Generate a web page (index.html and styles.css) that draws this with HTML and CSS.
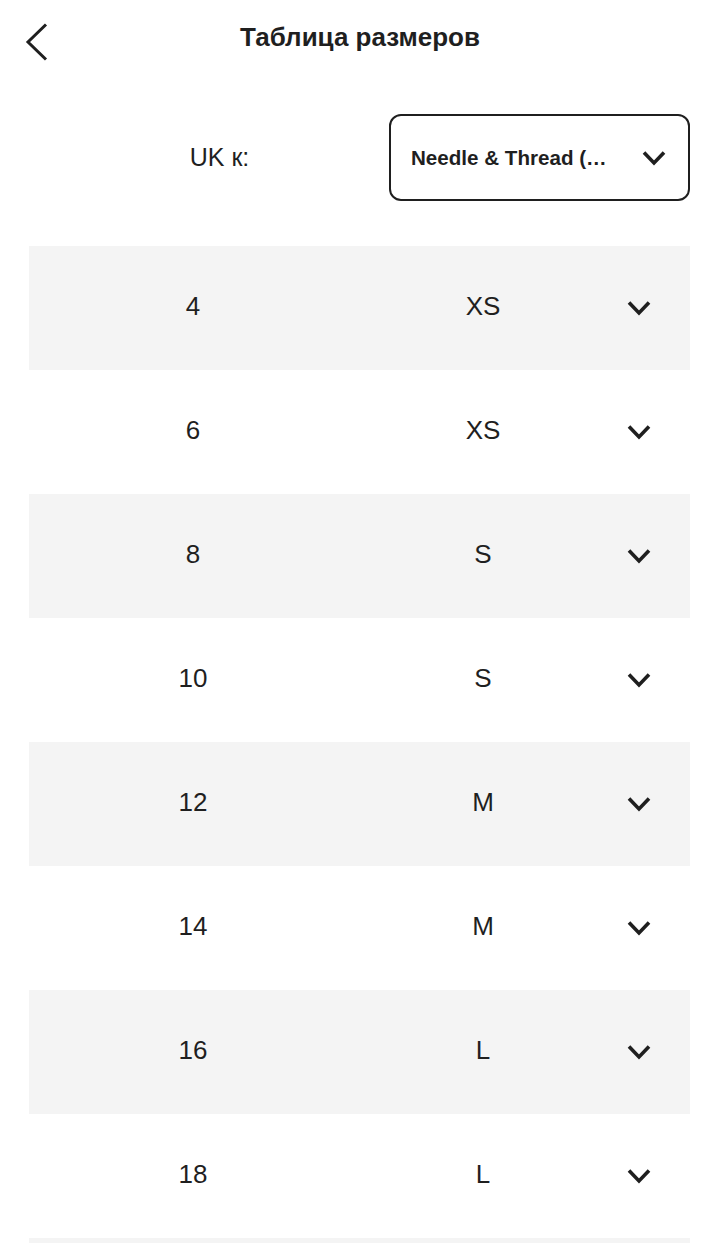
FILE: index.html
```html
<!DOCTYPE html>
<html lang="ru">
<head>
<meta charset="utf-8">
<title>Таблица размеров</title>
<link rel="stylesheet" href="styles.css">
</head>
<body>
<div class="page">
  <header class="topbar">
    <button class="back" aria-label="Назад">
      <svg width="26" height="40" viewBox="0 0 26 40"><path d="M23 2.5 L5 20 L23 37.5" fill="none" stroke="#1f1f1f" stroke-width="3"/></svg>
    </button>
    <h1 class="title">Таблица размеров</h1>
  </header>

  <section class="selector">
    <div class="selector-label">UK к:</div>
    <div class="select">
      <span class="select-text">Needle &amp; Thread (…</span>
      <svg class="chev" width="24" height="16" viewBox="0 0 24 16"><path d="M2 2.5 L12 13 L22 2.5" fill="none" stroke="#1f1f1f" stroke-width="3.6"/></svg>
    </div>
  </section>

  <section class="table">
    <div class="row shade"><span class="c1">4</span><span class="c2">XS</span><span class="c3"><svg class="chev" width="24" height="16" viewBox="0 0 24 16"><path d="M2 2.5 L12 13 L22 2.5" fill="none" stroke="#1f1f1f" stroke-width="3.6"/></svg></span></div>
    <div class="row"><span class="c1">6</span><span class="c2">XS</span><span class="c3"><svg class="chev" width="24" height="16" viewBox="0 0 24 16"><path d="M2 2.5 L12 13 L22 2.5" fill="none" stroke="#1f1f1f" stroke-width="3.6"/></svg></span></div>
    <div class="row shade"><span class="c1">8</span><span class="c2">S</span><span class="c3"><svg class="chev" width="24" height="16" viewBox="0 0 24 16"><path d="M2 2.5 L12 13 L22 2.5" fill="none" stroke="#1f1f1f" stroke-width="3.6"/></svg></span></div>
    <div class="row"><span class="c1">10</span><span class="c2">S</span><span class="c3"><svg class="chev" width="24" height="16" viewBox="0 0 24 16"><path d="M2 2.5 L12 13 L22 2.5" fill="none" stroke="#1f1f1f" stroke-width="3.6"/></svg></span></div>
    <div class="row shade"><span class="c1">12</span><span class="c2">M</span><span class="c3"><svg class="chev" width="24" height="16" viewBox="0 0 24 16"><path d="M2 2.5 L12 13 L22 2.5" fill="none" stroke="#1f1f1f" stroke-width="3.6"/></svg></span></div>
    <div class="row"><span class="c1">14</span><span class="c2">M</span><span class="c3"><svg class="chev" width="24" height="16" viewBox="0 0 24 16"><path d="M2 2.5 L12 13 L22 2.5" fill="none" stroke="#1f1f1f" stroke-width="3.6"/></svg></span></div>
    <div class="row shade"><span class="c1">16</span><span class="c2">L</span><span class="c3"><svg class="chev" width="24" height="16" viewBox="0 0 24 16"><path d="M2 2.5 L12 13 L22 2.5" fill="none" stroke="#1f1f1f" stroke-width="3.6"/></svg></span></div>
    <div class="row"><span class="c1">18</span><span class="c2">L</span><span class="c3"><svg class="chev" width="24" height="16" viewBox="0 0 24 16"><path d="M2 2.5 L12 13 L22 2.5" fill="none" stroke="#1f1f1f" stroke-width="3.6"/></svg></span></div>
    <div class="row shade"></div>
  </section>
</div>
</body>
</html>
```

FILE: styles.css
```css
* { box-sizing: border-box; }
html, body { margin: 0; padding: 0; background: #fff; }
body {
  font-family: "Liberation Sans", Arial, sans-serif;
  color: #1f1f1f;
}
.page { width: 720px; }

.topbar {
  position: relative;
  height: 76px;
  display: flex;
  align-items: center;
  justify-content: center;
  padding-bottom: 2px;
}
.back {
  position: absolute;
  left: 23px;
  top: 22px;
  padding: 0;
  border: 0;
  background: none;
  line-height: 0;
}
.title {
  margin: 0;
  font-size: 26px;
  font-weight: 700;
}

.selector {
  margin-top: 38px;
  padding: 0 30px 0 29px;
  display: grid;
  grid-template-columns: 1fr 301px;
  align-items: center;
}
.selector-label {
  text-align: center;
  padding-left: 21px;
  font-size: 25px;
}
.select {
  height: 87px;
  border: 2px solid #1f1f1f;
  border-radius: 12px;
  display: flex;
  align-items: center;
  justify-content: space-between;
  padding: 0 22px 0 20px;
}
.select-text {
  font-size: 20.6px;
  font-weight: 700;
  white-space: nowrap;
}

.table {
  margin: 45px 30px 0 29px;
}
.row {
  height: 124px;
  display: grid;
  grid-template-columns: 328px 252px 60px;
  align-items: center;
  font-size: 26px;
  padding-bottom: 4px;
}
.row.shade { background: #f4f4f4; }
.c1, .c2 { text-align: center; }
.c3 { display: flex; justify-content: center; line-height: 0; padding-top: 4px; }
```
